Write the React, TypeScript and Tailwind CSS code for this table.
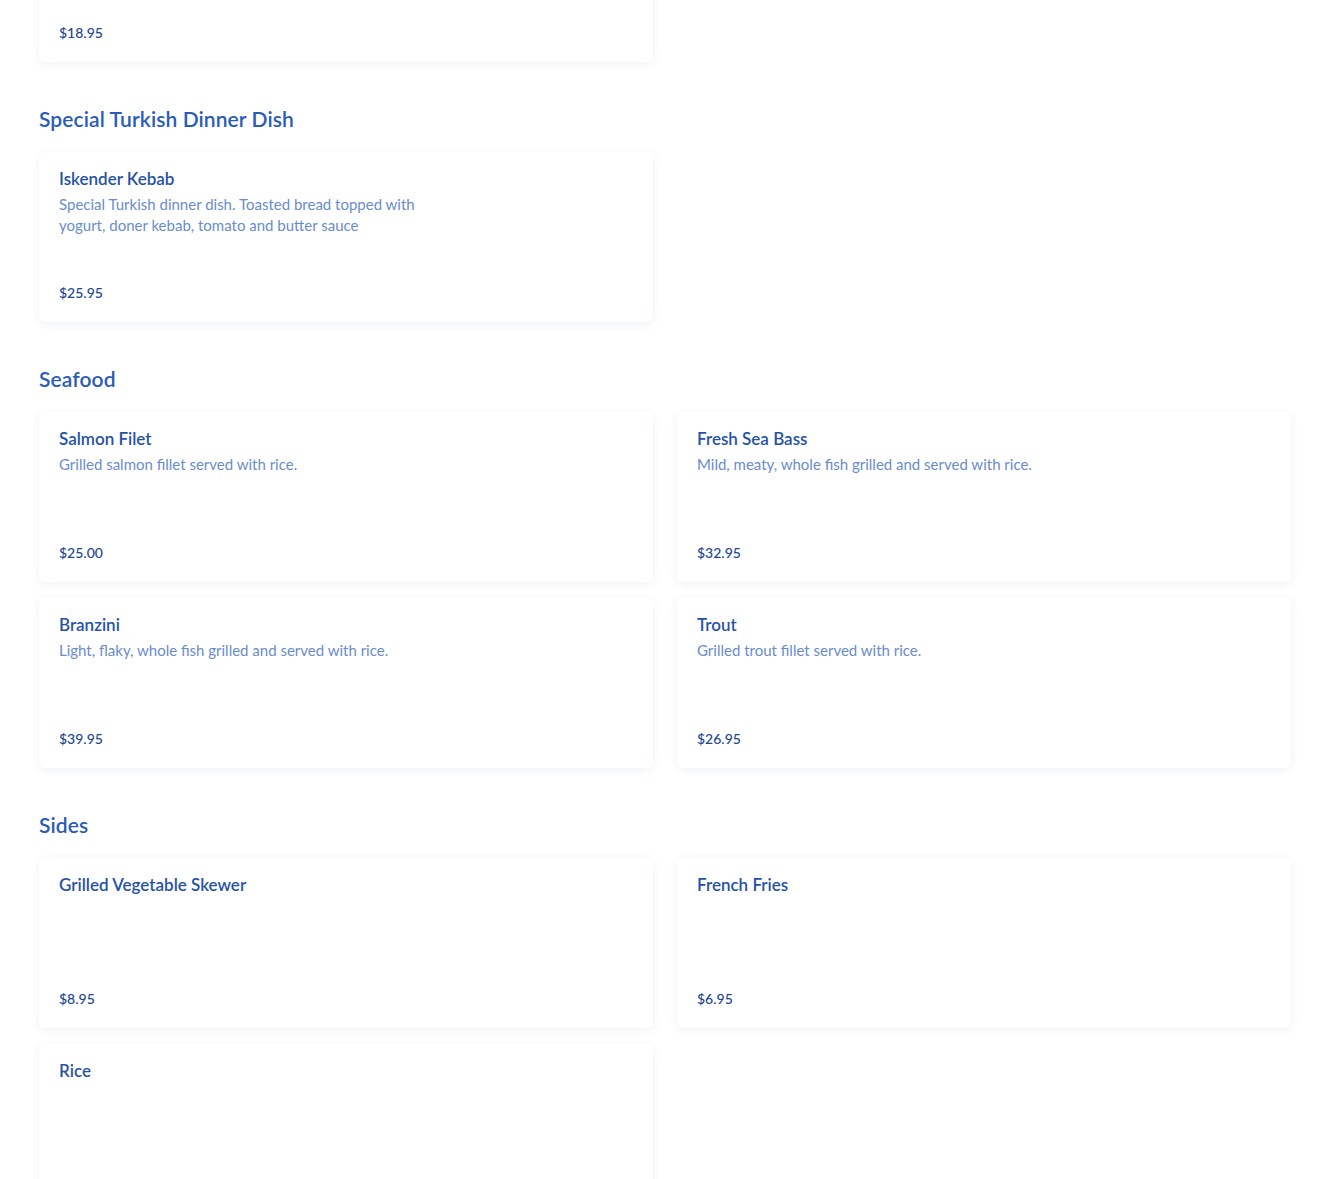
import React from "react";

type Item = { name: string; description?: string; price: string };
type Section = { title: string; items: Item[] };

const sections: Section[] = [
  {
    title: "Special Turkish Dinner Dish",
    items: [
      {
        name: "Iskender Kebab",
        description:
          "Special Turkish dinner dish. Toasted bread topped with yogurt, doner kebab, tomato and butter sauce",
        price: "$25.95",
      },
    ],
  },
  {
    title: "Seafood",
    items: [
      { name: "Salmon Filet", description: "Grilled salmon fillet served with rice.", price: "$25.00" },
      { name: "Fresh Sea Bass", description: "Mild, meaty, whole fish grilled and served with rice.", price: "$32.95" },
      { name: "Branzini", description: "Light, flaky, whole fish grilled and served with rice.", price: "$39.95" },
      { name: "Trout", description: "Grilled trout fillet served with rice.", price: "$26.95" },
    ],
  },
  {
    title: "Sides",
    items: [
      { name: "Grilled Vegetable Skewer", price: "$8.95" },
      { name: "French Fries", price: "$6.95" },
      { name: "Rice", price: "$3.95" },
    ],
  },
];

const MenuCard = ({ item, className = "" }: { item: Item; className?: string }) => (
  <div
    className={`bg-white rounded-md shadow-[0_2px_10px_rgba(30,60,120,0.07)] h-[170px] px-5 pt-[16px] pb-[19px] flex flex-col justify-between ${className}`}
  >
    <div>
      <h3 className="text-[17px] leading-[22px] font-semibold text-[#2652a6]">{item.name}</h3>
      {item.description && (
        <p className="mt-[4px] text-[15px] leading-[21px] text-[#6a8ccc] max-w-[375px]">
          {item.description}
        </p>
      )}
    </div>
    <p className="text-[14px] leading-[20px] font-medium text-[#23468f]">{item.price}</p>
  </div>
);

const App = () => {
  return (
    <div className="min-h-screen bg-white overflow-hidden font-['Lato',sans-serif]">
      <div className="px-[39px] pb-10">
        {/* tail of the previous section */}
        <div className="grid grid-cols-2 gap-x-6 gap-y-4 -mt-[108px]">
          <MenuCard item={{ name: "Chicken Shish", description: "", price: "$18.95" }} className="[&_h3]:invisible" />
        </div>

        {sections.map((section) => (
          <section key={section.title} className="mt-[43px]">
            <h2 className="text-[21px] leading-[28px] font-semibold text-[#2a5cb8] mb-[19px] tracking-[0.1px]">
              {section.title}
            </h2>
            <div className="grid grid-cols-2 gap-x-6 gap-y-4">
              {section.items.map((item) => (
                <MenuCard key={item.name} item={item} />
              ))}
            </div>
          </section>
        ))}
      </div>
    </div>
  );
};

export default App;
